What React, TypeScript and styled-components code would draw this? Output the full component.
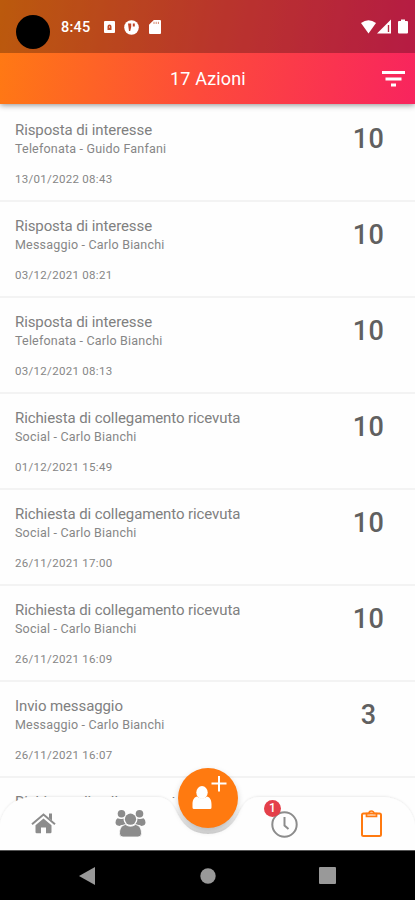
import React from 'react';
import styled, { createGlobalStyle } from 'styled-components';

const GlobalStyle = createGlobalStyle`
  html, body { margin: 0; padding: 0; background: #fff; }
  *, *::before, *::after { box-sizing: border-box; }
`;

const Screen = styled.div`
  width: 415px;
  height: 900px;
  display: flex;
  flex-direction: column;
  overflow: hidden;
  background: #fefefe;
  font-family: Roboto, 'Liberation Sans', sans-serif;
`;

const Top = styled.header`
  flex: none;
  position: relative;
  z-index: 1;
  background: linear-gradient(100deg, #ff7b12 0%, #fd4a3b 50%, #f8245e 100%);
  box-shadow: 0 1px 6px rgba(0, 0, 0, 0.45);
`;

const StatusBar = styled.div`
  height: 53px;
  display: flex;
  align-items: center;
  padding: 1px 5px 0 16px;
  background: rgba(0, 0, 0, 0.265);
  color: #fff;
`;

const Camera = styled.div`
  width: 34px;
  height: 34px;
  margin: 10px 11px 0 0;
  border-radius: 50%;
  background: #000;
`;

const Clock = styled.span`
  width: 43px;
  font-size: 14.5px;
  font-weight: 500;
  letter-spacing: 0.2px;
`;

const StatusIcons = styled.div`
  display: flex;
  align-items: center;
  gap: 9px;
`;

const Signals = styled.div`
  margin-left: auto;
  display: flex;
  align-items: center;
`;

const TitleBar = styled.div`
  height: 51px;
  display: grid;
  grid-template-columns: 1fr auto 1fr;
  align-items: center;
  padding-right: 10px;
  color: #fff;
`;

const Title = styled.h1`
  grid-column: 2;
  margin: 1px 0 0 11px;
  font-size: 18px;
  line-height: 24px;
  font-weight: 400;
  letter-spacing: 0.15px;
`;

const FilterButton = styled.button`
  justify-self: end;
  display: flex;
  padding: 0;
  border: 0;
  background: none;
`;

const List = styled.main`
  flex: 1;
  min-height: 0;
  padding-top: 2px;
`;

const Row = styled.article`
  height: 96px;
  display: flex;
  justify-content: space-between;
  padding: 14px 14px 0 15px;
  border-bottom: 2px solid #f3f3f3;
`;

const Name = styled.div`
  font-size: 15px;
  line-height: 20px;
  letter-spacing: -0.1px;
  color: #808080;
`;

const Detail = styled.div`
  font-size: 12.5px;
  line-height: 17px;
  letter-spacing: 0.2px;
  color: #868686;
`;

const Stamp = styled.div`
  margin-top: 14px;
  font-size: 11.5px;
  line-height: 16px;
  letter-spacing: 0.3px;
  color: #868686;
`;

const Score = styled.div`
  width: 65px;
  padding-top: 3px;
  text-align: center;
  font-size: 27px;
  line-height: 32px;
  font-weight: 500;
  letter-spacing: 0.3px;
  color: #606060;
`;

const TabBar = styled.nav`
  flex: none;
  position: relative;
  height: 53px;
`;

const TabShape = styled.svg`
  position: absolute;
  left: 0;
  bottom: 0;
  display: block;
`;

const Tabs = styled.div`
  position: relative;
  height: 53px;
  display: grid;
  grid-template-columns: 87px 87px 67px 87px 87px;
  align-items: center;
  justify-items: center;
`;

const Tab = styled.button`
  position: relative;
  display: flex;
  padding: 0;
  border: 0;
  background: none;
`;

const Fab = styled.button`
  position: absolute;
  left: 178px;
  top: -29px;
  width: 60px;
  height: 60px;
  padding: 0;
  border: 0;
  border-radius: 50%;
  background: #ff7a10;
  box-shadow: 0 3px 6px rgba(0, 0, 0, 0.18);
`;

const Badge = styled.span`
  position: absolute;
  left: -7px;
  top: -9px;
  width: 17px;
  height: 17px;
  border-radius: 50%;
  background: #e4404a;
  color: #fff;
  font: 500 12px/17px Roboto, sans-serif;
  text-align: center;
`;

const SystemNav = styled.footer`
  flex: none;
  height: 50px;
  display: grid;
  grid-template-columns: 95px 121px 1fr;
  align-items: center;
  background: #000;
  border-top: 1px solid #555;
  svg { justify-self: end; }
  svg:last-child { justify-self: start; margin-left: 103px; }
`;

const ACTIONS = [
  ['Risposta di interesse', 'Telefonata - Guido Fanfani', '13/01/2022 08:43', '10'],
  ['Risposta di interesse', 'Messaggio - Carlo Bianchi', '03/12/2021 08:21', '10'],
  ['Risposta di interesse', 'Telefonata - Carlo Bianchi', '03/12/2021 08:13', '10'],
  ['Richiesta di collegamento ricevuta', 'Social - Carlo Bianchi', '01/12/2021 15:49', '10'],
  ['Richiesta di collegamento ricevuta', 'Social - Carlo Bianchi', '26/11/2021 17:00', '10'],
  ['Richiesta di collegamento ricevuta', 'Social - Carlo Bianchi', '26/11/2021 16:09', '10'],
  ['Invio messaggio', 'Messaggio - Carlo Bianchi', '26/11/2021 16:07', '3'],
];

export default function App() {
  return (
    <Screen>
      <GlobalStyle />
      <Top>
        <StatusBar>
          <Camera />
          <Clock>8:45</Clock>
          <StatusIcons>
            <svg width="11" height="12" viewBox="0 0 11 12">
              <rect width="11" height="12" rx="1" fill="#fff" />
              <path d="M3.5 9V5.4a2 2 0 0 1 4 0V9ZM5 5.6v1h1v-1Z" fill="#c04a26" />
            </svg>
            <svg width="15" height="15" viewBox="0 0 15 15">
              <circle cx="7.5" cy="7.5" r="7.3" fill="#fff" />
              <path d="M4 3.5h3.2v3.5l-1 4H5ZM8.800 3.500h2v3h-2Z" fill="#c04528" />
            </svg>
            <svg width="14" height="14" viewBox="-1 0 14 14">
              <path d="M4.8 0H11q1 0 1 1v12q0 1-1 1H1q-1 0-1-1V4.800Z" fill="#fff" />
              <path d="M5 1.800v2.200M7.200 1.800v2.200M9.400 1.800v2.200" stroke="#d07a60" strokeWidth=".9" />
            </svg>
          </StatusIcons>
          <Signals>
            <svg width="50" height="16" viewBox="0 0 50 16">
              <path d="M1 4Q8.500 -1.500 16 4L8.500 14.500Z" fill="#fff" />
              <path d="M31 0.500V14.500H17Z" fill="#fff" />
              <path d="M28.500 6v7" stroke="#b72b40" strokeWidth="1.400" />
              <path d="M39 2h2V.5h4V2h2q1 0 1 1v10.500q0 1-1 1h-8q-1 0-1-1V3q0-1 1-1Z" fill="#fff" />
            </svg>
          </Signals>
        </StatusBar>
        <TitleBar>
          <Title>17 Azioni</Title>
          <FilterButton aria-label="Filtra">
            <svg width="23" height="16" viewBox="0 0 23 16" fill="#fff">
              <rect width="23" height="3" />
              <rect x="3.500" y="6.500" width="16" height="3" />
              <rect x="9" y="12.500" width="5" height="3" />
            </svg>
          </FilterButton>
        </TitleBar>
      </Top>
      <List>
        {ACTIONS.map(([name, detail, stamp, score]) => (
          <Row key={stamp}>
            <div>
              <Name>{name}</Name>
              <Detail>{detail}</Detail>
              <Stamp>{stamp}</Stamp>
            </div>
            <Score>{score}</Score>
          </Row>
        ))}
        <Row>
          <Name>Richiesta di collegamento ricevuta</Name>
        </Row>
      </List>
      <TabBar>
        <TabShape width="415" height="57" viewBox="0 -4 415 57">
          <defs>
            <filter id="edge" x="-5%" y="-20%" width="110%" height="140%">
              <feDropShadow dx="0" dy="-0.500" stdDeviation="1.200" floodColor="#000" floodOpacity="0.100" />
            </filter>
            <linearGradient id="well" x1="0" y1="0" x2="0" y2="1">
              <stop offset="0.200" stopColor="#fefefe" />
              <stop offset="1" stopColor="#dcdcdc" />
            </linearGradient>
          </defs>
          <path d="M165 1H251V38H165Z" fill="url(#well)" />
          <path
            d="M0 53V28C2 13 13 1 31 0H156C169 0 173 8 178 18C185 31 195 37 208 37S231 31 238 18C243 8 247 0 260 0H384C402 1 413 13 415 28V53Z"
            fill="#fefefe"
            filter="url(#edge)"
          />
        </TabShape>
        <Tabs>
          <Tab aria-label="Home">
            <svg width="25" height="21" viewBox="0 0 25 21" fill="#8c8c8c">
              <path d="M12.500 5.500 20.500 12.300V19q0 1.200-1.200 1.200H15V14.500h-5v5.700H5.700Q4.500 20.200 4.500 19V12.300Z" />
              <path d="M1 11.300 12.500 1.500 24 11.300" fill="none" stroke="#8c8c8c" strokeWidth="2" />
              <path d="M18 .5h3v7l-3-2.600Z" />
            </svg>
          </Tab>
          <Tab aria-label="Contatti">
            <svg width="31" height="29" viewBox="0 0 31 29" fill="#8c8c8c">
              <circle cx="6.500" cy="4.800" r="3.800" />
              <circle cx="24.500" cy="4.800" r="3.800" />
              <path d="M2.500 9.200q3 1.500 6 .3 0 4 3 6.300Q6 15.500 4.500 17 .5 16.500.5 13.500q0-3 2-4.300ZM28.500 9.200q-3 1.500-6 .3 0 4-3 6.300 5.500-.3 7 1.200 4-.5 4-3.500 0-3-2-4.300Z" />
              <circle cx="15.500" cy="10.200" r="6.400" fill="#fefefe" />
              <path d="M10.500 15.500q5 3.500 10 0c4.500 1 6 4.500 6 9q0 3.500-3.500 3.500H8q-3.500 0-3.500-3.500c0-4.500 1.500-8 6-9Z" stroke="#fefefe" strokeWidth=".8" />
              <circle cx="15.500" cy="10.200" r="5.600" />
            </svg>
          </Tab>
          <span />
          <Tab aria-label="Scadenze">
            <svg width="27" height="29" viewBox="0 -2 27 29" fill="none" stroke="#8c8c8c">
              <circle cx="13.500" cy="13.500" r="12.200" strokeWidth="2" />
              <path d="M13.500 6v8.500l4 3.500" strokeWidth="2" />
            </svg>
            <Badge>1</Badge>
          </Tab>
          <Tab aria-label="Azioni">
            <svg width="21" height="27" viewBox="0 0 21 27" fill="none" stroke="#ff7a10">
              <rect x="1" y="3.500" width="19" height="22.500" rx="1.500" strokeWidth="2" />
              <path d="M5.500 3.500v2.800h10V3.500H13a2.500 2.500 0 0 0-5 0Z" strokeWidth="1.700" />
            </svg>
          </Tab>
        </Tabs>
        <Fab aria-label="Aggiungi contatto">
          <svg width="60" height="60" viewBox="0 0 60 60" fill="#fff">
            <ellipse cx="24" cy="24.500" rx="5.700" ry="6.500" />
            <path d="M19 28.500q5 4 10 0c3.500 1 4.500 4 4.500 8v3q0 1.500-1.500 1.500H16q-1.500 0-1.500-1.500v-3c0-4 1-7 4.500-8Z" />
            <path d="M41 8v15.500M33.500 15.500h15" stroke="#fff" strokeWidth="2" />
          </svg>
        </Fab>
      </TabBar>
      <SystemNav>
        <svg width="16" height="18" viewBox="0 0 16 18">
          <path d="M0 9 16 0V18Z" fill="#999" />
        </svg>
        <svg width="16" height="16" viewBox="0 0 16 16">
          <circle cx="8" cy="8" r="7.700" fill="#999" />
        </svg>
        <svg width="17" height="17" viewBox="0 0 17 17">
          <rect width="17" height="17" rx="1" fill="#999" />
        </svg>
      </SystemNav>
    </Screen>
  );
}
